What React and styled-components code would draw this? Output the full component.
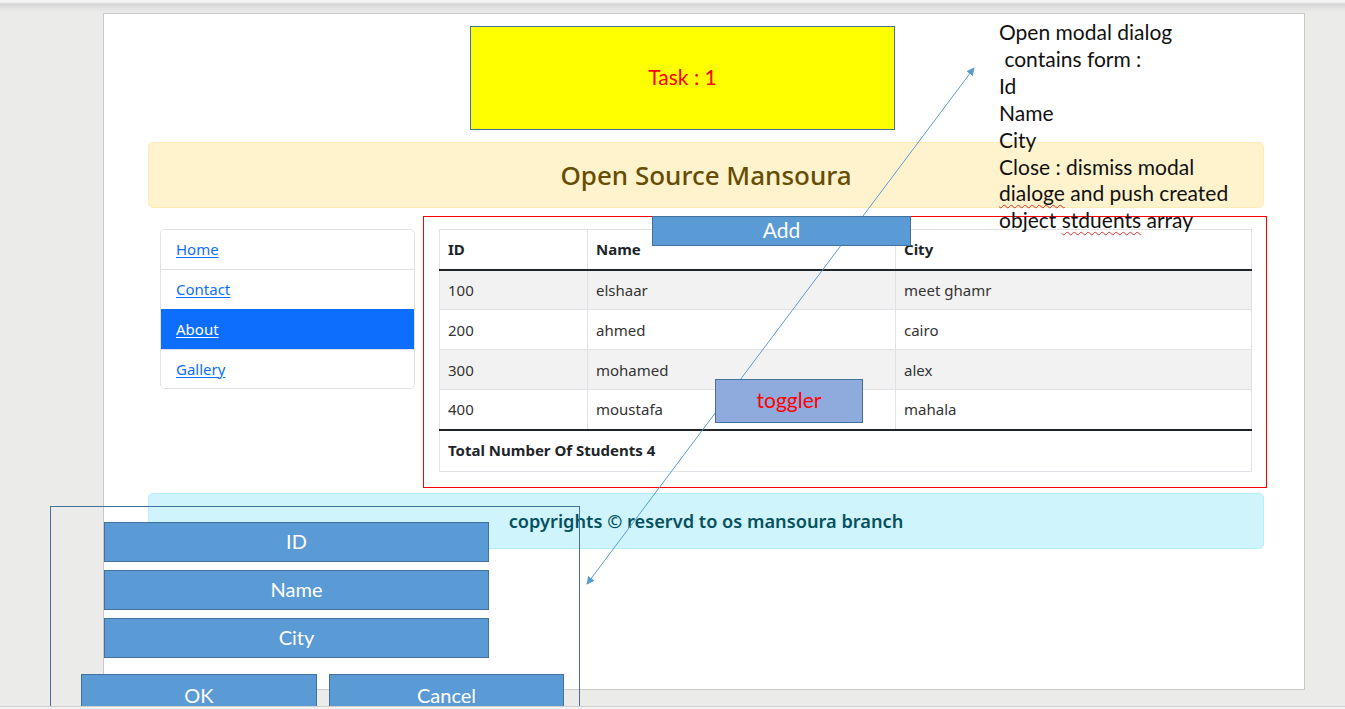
import React from "react";
import styled, { createGlobalStyle } from "styled-components";

const Global = createGlobalStyle`
  html, body { margin: 0; padding: 0; }
  body { width: 1345px; height: 709px; overflow: hidden; background: #ebebea; }
`;

const webFont = `"Noto Sans", "Open Sans", sans-serif`;
const slideFont = `Lato, "Open Sans", sans-serif`;

const Stage = styled.div`
  width: 1345px;
  height: 709px;
  display: flex;
  flex-direction: column;
  background: #ebebea;
  overflow: hidden;
`;

const TopBar = styled.div`
  flex: none;
  height: 13px;
  background: linear-gradient(#f5f5f5 0, #f3f3f3 2px, #d5d5d5 4px, #e3e3e3 8px, #ebebea 13px);
`;

const Workspace = styled.div`
  position: relative;
  flex: 1;
  overflow: hidden;
  padding-left: 103px;
`;

const BottomBar = styled.div`
  flex: none;
  height: 3px;
  box-sizing: border-box;
  border-top: 1px solid #cfcfcf;
  background: #f3f3f3;
`;

const Slide = styled.div`
  position: relative;
  width: 1202px;
  height: 677px;
  box-sizing: border-box;
  border: 1px solid #c8c8c8;
  background: #ffffff;
`;

const Page = styled.div`
  width: 1116px;
  margin: 128px 0 0 44px;
  font-family: ${webFont};
  color: #212529;
`;

const Alert = styled.div`
  box-sizing: border-box;
  height: ${(p) => p.$h}px;
  display: flex;
  align-items: center;
  justify-content: center;
  border-radius: 5px;
  border: 1px solid ${(p) => p.$border};
  background: ${(p) => p.$bg};
  color: ${(p) => p.$color};
  font-size: ${(p) => p.$size}px;
  font-weight: ${(p) => p.$weight};
  margin-top: ${(p) => p.$mt || 0}px;
`;

const Row = styled.div`
  display: grid;
  grid-template-columns: 279px 837px;
  margin-top: 21px;
  align-items: start;
`;

const Col = styled.div`
  padding: 0 12px;
`;

const ListGroup = styled.div`
  border: 1px solid #dee2e6;
  border-radius: 5px;
  overflow: hidden;
`;

const ListItem = styled.div`
  box-sizing: border-box;
  height: ${(p) => (p.$first || p.$last ? 39 : 40)}px;
  display: flex;
  align-items: center;
  padding: 0 15px ${(p) => (p.$first ? 2 : 1)}px;
  border-top: ${(p) => (p.$first ? "none" : "1px solid #dee2e6")};
  background: ${(p) => (p.$active ? "#0d6efd" : "#ffffff")};
  ${(p) => p.$active && "border-top-color: #0d6efd;"}
`;

const NavLink = styled.a`
  font-size: 15px;
  color: ${(p) => (p.$active ? "#ffffff" : "#0d6efd")};
  text-decoration: underline;
  text-underline-offset: 2px;
  text-decoration-thickness: 1px;
`;

const Table = styled.table`
  width: 100%;
  border-collapse: collapse;
  border: 1px solid #dee2e6;
  font-size: 15px;
`;

const Th = styled.th`
  height: 40px;
  box-sizing: border-box;
  padding: 0 8px;
  text-align: left;
  font-weight: 700;
  border: 1px solid #dee2e6;
  border-bottom: 2px solid #212529;
  width: ${(p) => p.$w || "auto"};
`;

const Tr = styled.tr`
  background: ${(p) => (p.$striped ? "#f2f2f2" : "#ffffff")};
`;

const Td = styled.td`
  height: 40px;
  box-sizing: border-box;
  padding: 0 8px;
  border: 1px solid #dee2e6;
  color: #333;
`;

const FootCell = styled.td`
  height: 42px;
  box-sizing: border-box;
  padding: 0 8px 1px;
  border: 1px solid #dee2e6;
  border-top: 2px solid #212529;
  font-weight: 700;
`;

/* ---- slide shapes ---- */

const Shape = styled.div`
  position: absolute;
  left: ${(p) => p.$x}px;
  top: ${(p) => p.$y}px;
  width: ${(p) => p.$w}px;
  height: ${(p) => p.$h}px;
  box-sizing: border-box;
  display: flex;
  align-items: center;
  justify-content: center;
  padding-bottom: 3px;
  border: 1px solid ${(p) => p.$border || "#41719c"};
  background: ${(p) => p.$bg || "transparent"};
  color: ${(p) => p.$color || "#ffffff"};
  font-family: ${slideFont};
  font-size: ${(p) => p.$size || 20}px;
`;

const Note = styled.div`
  position: absolute;
  left: 895px;
  top: 5px;
  font-family: ${slideFont};
  font-size: 21px;
  line-height: 26.9px;
  color: #111;
  white-space: pre;
`;

const Misspelled = styled.span`
  text-decoration: underline wavy #e03030;
  text-decoration-thickness: 1px;
  text-underline-offset: 3px;
`;

const ArrowLayer = styled.svg`
  position: absolute;
  left: 0;
  top: 0;
  width: 1200px;
  height: 675px;
  pointer-events: none;
  overflow: visible;
`;

/* ---- modal mockup ---- */

const ModalFrame = styled.div`
  position: absolute;
  left: 50px;
  top: 493px;
  width: 530px;
  height: 230px;
  box-sizing: border-box;
  border: 1px solid #41719c;
  padding-top: 15px;
  display: flex;
  flex-direction: column;
  font-family: ${slideFont};
`;

const FieldStack = styled.div`
  margin-left: 53px;
  width: 385px;
  display: flex;
  flex-direction: column;
  gap: 8px;
`;

const BlueBox = styled.div`
  box-sizing: border-box;
  height: ${(p) => p.$h || 40}px;
  width: ${(p) => (p.$w ? `${p.$w}px` : "auto")};
  display: flex;
  align-items: center;
  justify-content: center;
  padding-bottom: 2px;
  border: 1px solid #41719c;
  background: #5b9bd5;
  color: #ffffff;
  font-size: 20px;
`;

const ButtonRow = styled.div`
  margin-top: 16px;
  margin-left: 30px;
  display: flex;
  gap: 12px;
`;

const students = [
  { id: 100, name: "elshaar", city: "meet ghamr" },
  { id: 200, name: "ahmed", city: "cairo" },
  { id: 300, name: "mohamed", city: "alex" },
  { id: 400, name: "moustafa", city: "mahala" },
];

const links = ["Home", "Contact", "About", "Gallery"];

export default function App() {
  return (
    <Stage>
      <Global />
      <TopBar />
      <Workspace>
        <Slide>
          <Page>
            <Alert $h={66} $bg="#fff3cd" $border="#ffecb5" $color="#664d03" $size={26} $weight={500}>
              Open Source Mansoura
            </Alert>
            <Row>
              <Col>
                <ListGroup>
                  {links.map((l, i) => (
                    <ListItem key={l} $first={i === 0} $last={i === links.length - 1} $active={l === "About"}>
                      <NavLink href="#" $active={l === "About"}>{l}</NavLink>
                    </ListItem>
                  ))}
                </ListGroup>
              </Col>
              <Col>
                <Table>
                  <thead>
                    <tr>
                      <Th $w="148px">ID</Th>
                      <Th $w="308px">Name</Th>
                      <Th>City</Th>
                    </tr>
                  </thead>
                  <tbody>
                    {students.map((s, i) => (
                      <Tr key={s.id} $striped={i % 2 === 0}>
                        <Td>{s.id}</Td>
                        <Td>{s.name}</Td>
                        <Td>{s.city}</Td>
                      </Tr>
                    ))}
                  </tbody>
                  <tfoot>
                    <tr>
                      <FootCell colSpan={3}>Total Number Of Students {students.length}</FootCell>
                    </tr>
                  </tfoot>
                </Table>
              </Col>
            </Row>
            <Alert $h={56} $mt={21} $bg="#cff4fc" $border="#b6effb" $color="#055160" $size={18.2} $weight={600}>
              copyrights © reservd to os mansoura branch
            </Alert>
          </Page>

          <Shape $x={319} $y={202} $w={844} $h={272} $border="#ff0000" />
          <Shape $x={366} $y={12} $w={425} $h={104} $bg="#ffff00" $color="#ff0000" $size={21}>
            Task : 1
          </Shape>
          <Note>
            {"Open modal dialog\n contains form :\nId\nName\nCity\nClose : dismiss modal\n"}
            <Misspelled>dialoge</Misspelled>
            {" and push created\nobject "}
            <Misspelled>stduents</Misspelled>
            {" array"}
          </Note>
          <ArrowLayer viewBox="0 0 1200 675">
            <defs>
              <marker id="head" viewBox="0 0 10 10" refX="9" refY="5" markerWidth="8" markerHeight="8" orient="auto-start-reverse" markerUnits="userSpaceOnUse">
                <path d="M0 0 L10 5 L0 10 z" fill="#5b9bd5" />
              </marker>
            </defs>
            <line x1="483" y1="570" x2="870" y2="54" stroke="#5b9bd5" strokeWidth="1" markerStart="url(#head)" markerEnd="url(#head)" />
          </ArrowLayer>
          <Shape $x={548} $y={202} $w={259} $h={30} $bg="#5b9bd5" $size={21}>
            Add
          </Shape>
          <Shape $x={611} $y={365} $w={148} $h={44} $bg="#8faadc" $color="#ff0000" $size={21}>
            toggler
          </Shape>
        </Slide>

        <ModalFrame>
          <FieldStack>
            <BlueBox $h={40}>ID</BlueBox>
            <BlueBox $h={40}>Name</BlueBox>
            <BlueBox $h={40}>City</BlueBox>
          </FieldStack>
          <ButtonRow>
            <BlueBox $w={236} $h={44}>OK</BlueBox>
            <BlueBox $w={235} $h={44}>Cancel</BlueBox>
          </ButtonRow>
        </ModalFrame>
      </Workspace>
      <BottomBar />
    </Stage>
  );
}
